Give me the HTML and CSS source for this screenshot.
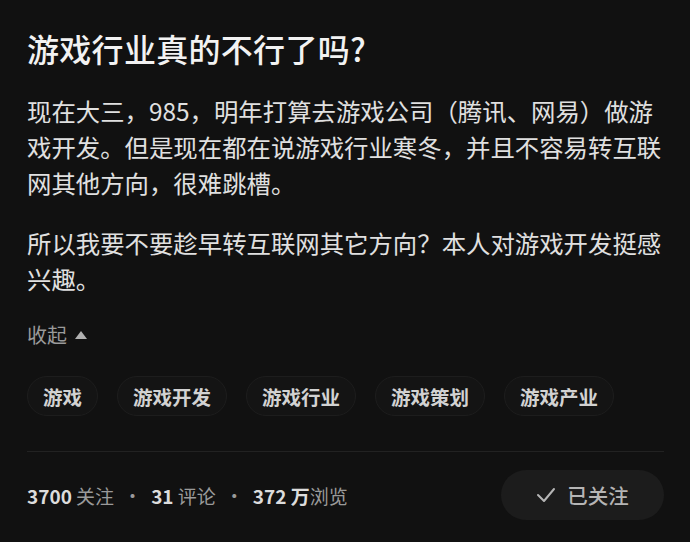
FILE: index.html
```html
<!DOCTYPE html>
<html lang="zh-CN">
<head>
  <meta charset="UTF-8" />
  <title>游戏行业真的不行了吗？</title>
  <link rel="stylesheet" href="styles.css">
</head>
<body>
  <div class="pergunta">
    <h1 class="titulo">游戏行业真的不行了吗?</h1>

    <div class="conteudo">
      <p>现在大三，985，明年打算去游戏公司（腾讯、网易）做游戏开发。但是现在都在说游戏行业寒冬，并且不容易转互联网其他方向，很难跳槽。</p>
      <p>所以我要不要趁早转互联网其它方向？本人对游戏开发挺感兴趣。</p>
    </div>

    <div class="recolher">收起 <span class="seta"></span></div>

    <ul class="tags">
      <li>游戏</li>
      <li>游戏开发</li>
      <li>游戏行业</li>
      <li>游戏策划</li>
      <li>游戏产业</li>
    </ul>

    <div class="rodape">
      <div class="stats">
        <b>3700</b> 关注<span class="ponto">·</span><b>31</b> 评论<span class="ponto">·</span><b>372 万</b>浏览
      </div>
      <button class="seguir">
        <svg width="20" height="16" viewBox="0 0 20 16">
          <polyline points="2,8 8,14 18,2" fill="none" stroke="#b5b5b5" stroke-width="2" stroke-linecap="round" stroke-linejoin="round" />
        </svg>
        已关注
      </button>
    </div>
  </div>
</body>
</html>
```

FILE: styles.css
```css
body {
  margin: 0;
  background: #111111;
  color: #e2e2e2;
  font-family: "Noto Sans CJK SC", "Noto Sans", sans-serif;
}

.pergunta {
  padding: 26px 26px 0 27px;
}

.titulo {
  margin: 0;
  font-size: 32px;
  line-height: 44px;
  font-weight: 500;
  color: #f2f2f2;
  letter-spacing: 0.3px;
}

.conteudo {
  margin-top: 23px;
  font-size: 24.4px;
  line-height: 36px;
  color: #e0e0e0;
}

.conteudo p {
  margin: 0 0 24px 0;
}

.conteudo p:last-child {
  margin-bottom: 0;
}

.recolher {
  margin-top: 24px;
  font-size: 20px;
  line-height: 28px;
  color: #9a9a9a;
  display: flex;
  align-items: center;
  gap: 8px;
}

.seta {
  width: 0;
  height: 0;
  border-left: 6px solid transparent;
  border-right: 6px solid transparent;
  border-bottom: 8px solid #b0b0b0;
}

.tags {
  list-style: none;
  padding: 0;
  margin: 27px 0 0 0;
  display: flex;
  gap: 19px;
}

.tags li {
  height: 40px;
  box-sizing: border-box;
  padding: 0 15px;
  border-radius: 20px;
  border: 1px solid #1d1d1d;
  background: #141414;
  font-size: 19.5px;
  font-weight: 700;
  color: #d2d2d2;
  display: flex;
  align-items: center;
}

.rodape {
  margin-top: 35px;
  border-top: 1px solid #222222;
  padding-top: 18px;
  display: flex;
  align-items: center;
  justify-content: space-between;
}

.stats {
  font-size: 19px;
  color: #9a9a9a;
}

.stats b {
  color: #dcdcdc;
  font-weight: 700;
}

.ponto {
  margin: 0 9px;
}

.seguir {
  width: 163px;
  height: 50px;
  border: none;
  border-radius: 25px;
  background: #1c1c1c;
  color: #b5b5b5;
  font-family: "Noto Sans CJK SC", "Noto Sans", sans-serif;
  font-size: 20.5px;
  font-weight: 500;
  display: flex;
  align-items: center;
  justify-content: center;
  gap: 11px;
  cursor: pointer;
}
```
